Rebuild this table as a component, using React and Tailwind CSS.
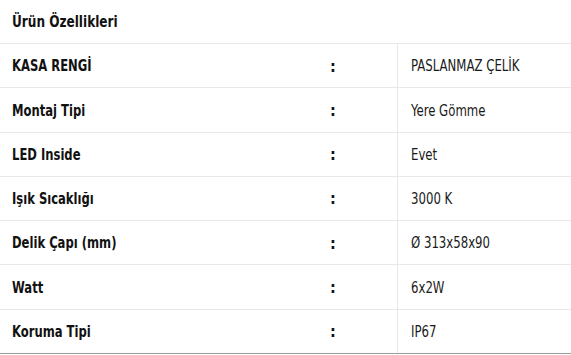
import React from "react";

const specs = [
    { label: "KASA RENGİ", value: "PASLANMAZ ÇELİK" },
    { label: "Montaj Tipi", value: "Yere Gömme" },
    { label: "LED Inside", value: "Evet" },
    { label: "Işık Sıcaklığı", value: "3000 K" },
    { label: "Delik Çapı (mm)", value: "Ø 313x58x90" },
    { label: "Watt", value: "6x2W" },
    { label: "Koruma Tipi", value: "IP67" },
];

// narrow text: the condensed face is still wider than the original one
function Narrow({ children, className }) {
    return (
        <span className={"inline-block whitespace-nowrap origin-left scale-x-[0.8] " + className}>
            {children}
        </span>
    );
}

function App() {
    return (
        <div className="w-[571px] h-[355px] bg-white font-['Liberation_Sans_Narrow','DejaVu_Sans_Condensed',sans-serif]">
            {/* Header */}
            <div className="h-[43px] flex items-center pl-3 text-[16px] font-bold text-[#111]">
                <Narrow className="scale-x-[0.84]">Ürün Özellikleri</Narrow>
            </div>

            {/* Rows */}
            <div className="border-b border-[#9a9a9a]">
                {specs.map((s) => (
                    <div key={s.label} className="h-[44.29px] flex border-t border-[#e8e8e8]">
                        <div className="w-[329px] pl-3 pt-[2px] flex items-center text-[16.5px] font-bold text-[#111]">
                            <Narrow className="scale-x-[0.78]">{s.label}</Narrow>
                        </div>
                        <div className="w-[68px] pl-[1px] pt-[2px] flex items-center text-[16px] font-bold text-[#111]">
                            :
                        </div>
                        <div className="flex-1 border-l border-[#e8e8e8] pl-[13px] pt-[2px] flex items-center text-[16.5px] text-[#1a1a1a]">
                            <Narrow className="scale-x-[0.79]">{s.value}</Narrow>
                        </div>
                    </div>
                ))}
            </div>
        </div>
    );
}

export default App;
